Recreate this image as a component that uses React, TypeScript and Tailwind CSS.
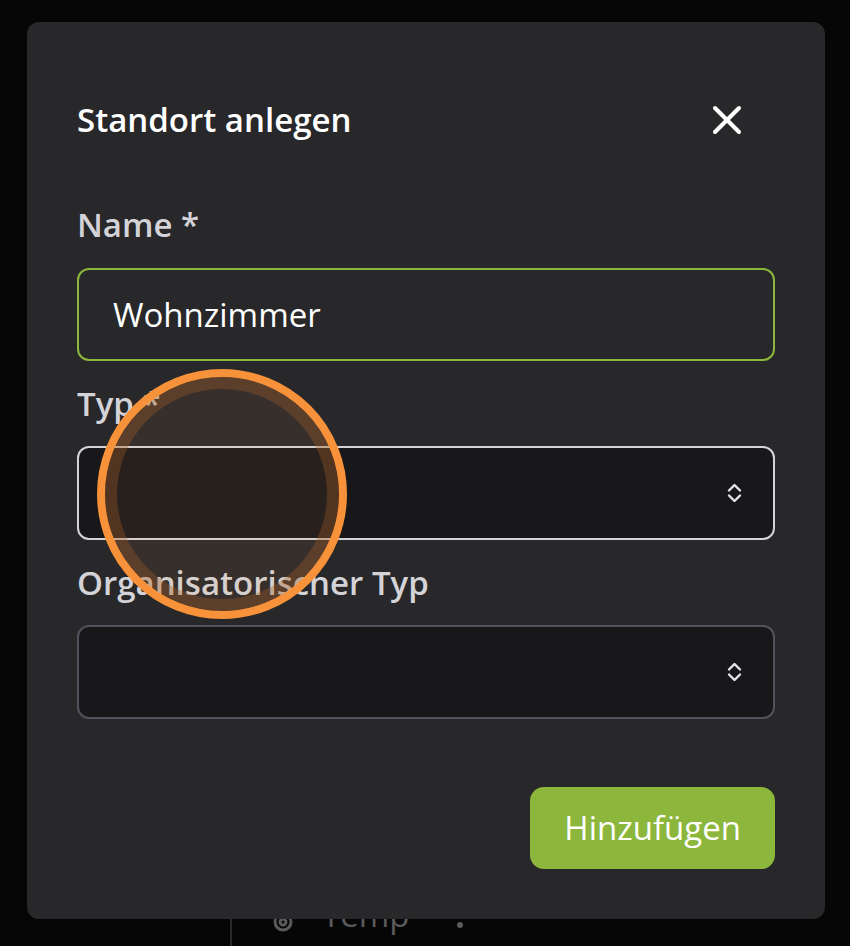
import React from "react";

const fields = [
  { label: "Typ *", border: "border-zinc-300" },
  { label: "Organisatorischer Typ", border: "border-zinc-600" },
];

const ChevronUpDown: React.FC = () => (
  <svg width="15" height="22" viewBox="0 0 15 22" fill="none" stroke="#e4e4e7" strokeWidth="2.4" strokeLinecap="round" strokeLinejoin="round">
    <path d="M2 8.5 7.5 3 13 8.5" />
    <path d="M2 13.5 7.5 19 13 13.5" />
  </svg>
);

const App: React.FC = () => {
  return (
    <div
      className="relative h-[946px] w-[850px] overflow-hidden bg-[#060606]"
      style={{ fontFamily: '"Open Sans", "Liberation Sans", sans-serif' }}
    >
      {/* Page behind the dialog */}

      <div className="flex h-full flex-col justify-end pl-[230px]">
        <div className="flex h-[120px] items-end border-l-2 border-[#2a2a2a] pb-[7px]">
          <div className="flex h-[48px] items-center pl-[40px] text-[33px] leading-[48px] text-[#5a5a5a]">
            <svg width="22" height="22" viewBox="0 0 22 22" fill="none" stroke="#5a5a5a" strokeWidth="3" className="mt-[14px]">
              <circle cx="11" cy="11" r="8" />
              <circle cx="11" cy="11" r="3" />
            </svg>
            <span className="ml-[28px]">Temp</span>
            <span className="ml-[48px] mt-[20px] h-[6px] w-[6px] rounded-full bg-[#5a5a5a]" />
          </div>
        </div>
      </div>

      {/* Dialog */}

      <div className="absolute left-[27px] top-[22px] w-[798px] rounded-[12px] bg-[#28282a] px-[50px] pb-[50px] pt-[74px]">
        <div className="flex h-[48px] items-center justify-between">
          <h2 className="text-[33px] font-semibold leading-[48px] text-white">Standort anlegen</h2>
          <svg width="30" height="30" viewBox="0 0 30 30" fill="none" stroke="white" strokeWidth="4" strokeLinecap="round" className="mr-[33px]">
            <path d="M3 3 27 27" />
            <path d="M27 3 3 27" />
          </svg>
        </div>

        <div className="mt-[57px] text-[33px] font-semibold leading-[48px] text-zinc-300">Name *</div>
        <div className="mt-[19px] flex h-[93px] items-center rounded-[12px] border-2 border-[#8cb63c] pl-[34px] text-[33px] text-white">
          Wohnzimmer
        </div>

        {fields.map((field) => (
          <div key={field.label}>
            <div className="mt-[19px] text-[33px] font-semibold leading-[48px] text-zinc-300">{field.label}</div>
            <div className={`mt-[18px] flex h-[94px] items-center justify-end rounded-[12px] border-2 bg-[#18181b] pr-[31px] ${field.border}`}>
              <ChevronUpDown />
            </div>
          </div>
        ))}

        <div className="mt-[68px] flex justify-end">
          <button className="flex h-[82px] items-center rounded-[14px] bg-[#8cb63c] px-[34px] text-[33px] text-white">
            Hinzufügen
          </button>
        </div>
      </div>

      {/* Click indicator */}

      <div className="absolute left-[97px] top-[369px] h-[250px] w-[250px] rounded-full border-[8px] border-[#f7923a] bg-[rgba(255,140,60,0.07)] shadow-[inset_0_0_0_12px_rgba(160,95,40,0.35)]" />
    </div>
  );
};

export default App;
